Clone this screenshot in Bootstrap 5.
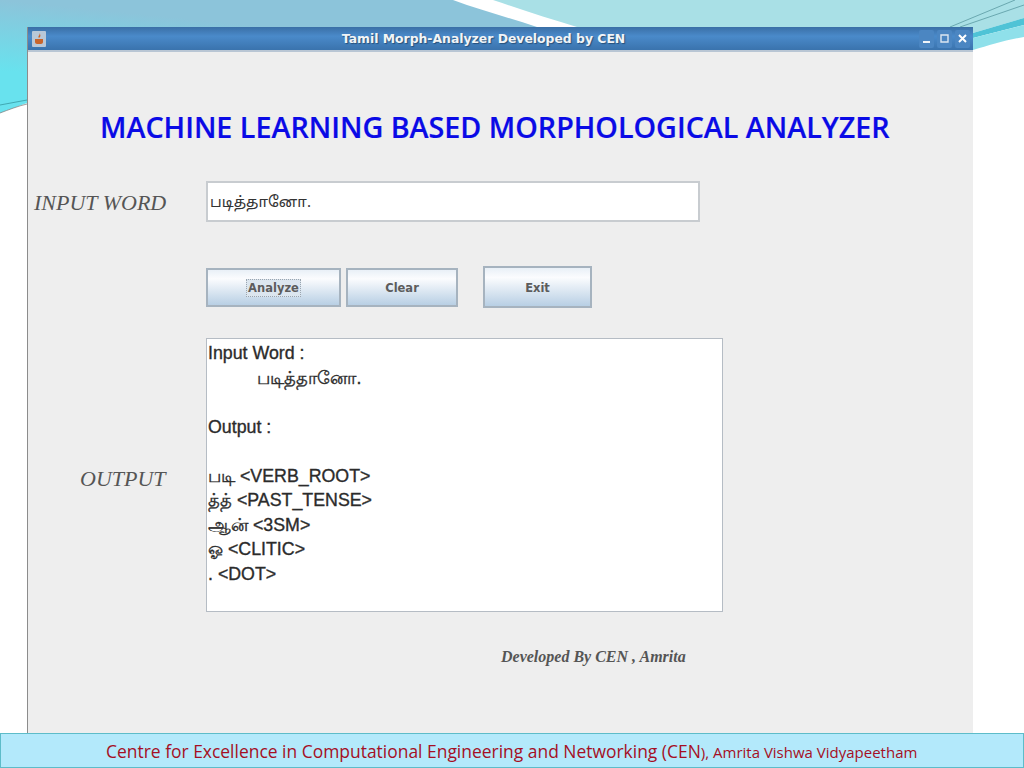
<!DOCTYPE html>
<html lang="en">
<head>
  <meta charset="UTF-8">
  <title>Tamil Morph-Analyzer</title>
  <link href="https://cdn.jsdelivr.net/npm/bootstrap@5.3.0/dist/css/bootstrap.min.css" rel="stylesheet">
  <style>
    body { width: 1024px; height: 768px; overflow: hidden; background: #fff; position: relative; font-family: "Liberation Sans", sans-serif; }
    .slide-bg { position: absolute; left: 0; top: 0; }
    .slide-body { position: relative; height: 733px; padding: 27px 51px 0 27px; }
    .app-window { height: 706px; background: #eeeeee; border-left: 1px solid #8c8c8c; }
    .app-titlebar { height: 25px; background: linear-gradient(#3a6fa6, #4a8aca 40%, #3a73ad); border-bottom: 2px solid #b9c6d4; color: #f1f4f7; font: bold 12.4px "DejaVu Sans", sans-serif; padding: 0 3px 0 4px; gap: 3px; }
    .app-title { flex: 1; text-align: center; padding-left: 2px; text-shadow: 1px 1px 1px #27507a; }
    .tb-btn { width: 15px; height: 18px; border-radius: 2px; background: #4b86c2; }
    .app-heading { font: 600 28.7px "Open Sans", sans-serif; color: #0a0ae6; margin: 55px 0 0 72px; line-height: 40px; -webkit-text-stroke: 0.2px #0a0ae6; white-space: nowrap; }
    .input-row { margin-top: 34px; }
    .side-label { width: 178px; padding: 2px 0 0 6px; font: italic 22px "Liberation Serif", serif; color: #555; }
    .word-box { width: 494px; height: 41px; background: #fff; border: 2px solid #c8ccd0; padding-left: 2px; font-size: 15px; line-height: 41px; color: #333; font-family: "Noto Sans Tamil", "Lohit Tamil", "Liberation Sans", sans-serif; }
    .btn-row { margin: 44px 0 0 178px; align-items: center; }
    .swing-btn { height: 39px; padding: 2px 0 0; border: 2px solid #a6b3bf; border-radius: 0; background: linear-gradient(#e9f0f7, #fbfcfe 25%, #b8cfe4); font: bold 11.5px "DejaVu Sans", sans-serif; color: #5c5c5c; }
    .swing-btn:hover { border-color: #a6b3bf; color: #5c5c5c; }
    .btn-analyze { width: 135px; margin-right: 5px; }
    .btn-analyze span { border: 1px dotted #9aa5b0; padding: 1px; background: #dce6ef; }
    .btn-clear { width: 112px; margin-right: 25px; }
    .btn-exit { width: 109px; height: 42px; }
    .output-row { margin-top: 30px; }
    .output-label { width: 178px; padding-left: 52px; padding-top: 128px; font: italic 22px "Liberation Serif", serif; color: #555; }
    .output-box { width: 517px; height: 274px; background: #fff; border: 1px solid #b5bcc4; padding: 2px 0 0 1px; font-size: 17.8px; line-height: 24.5px; color: #2b2b2b; -webkit-text-stroke: 0.35px #2b2b2b; white-space: pre; }
    .dev-note { margin: 36px 0 0 473px; font: italic bold 16px "Liberation Serif", serif; color: #555; white-space: nowrap; }
    .slide-footer { height: 35px; background: #b3e9fb; border: 1px solid #5dbcc9; color: #a50f24; font: 17.45px "Open Sans", sans-serif; line-height: 35px; padding-left: 105px; white-space: nowrap; }
    .slide-footer small { font-size: 15px; }
  </style>
</head>
<body>
  <!-- slide decoration behind the window -->
  <svg class="slide-bg" width="1024" height="130" viewBox="0 0 1024 130">
    <defs>
      <linearGradient id="skyLeft" gradientUnits="userSpaceOnUse" x1="0" y1="0" x2="-7" y2="70">
        <stop offset="0" stop-color="#8cc4da"/>
        <stop offset="1" stop-color="#68e2ee"/>
      </linearGradient>
    </defs>
    <rect width="1024" height="130" fill="#fff"/>
    <path d="M0 0H453C480 10 510 18 537 27H30V102C18 106 8 110 0 113Z" fill="url(#skyLeft)"/>
    <path d="M493 0H1024V18L973 33V27H577C550 19 520 9 493 0Z" fill="#a9e0e6"/>
    <path d="M973 33L1024 18V25L973 38Z" fill="#4fc3d6"/>
    <path d="M973 38L1024 25V37C1005 40 990 45 973 50Z" fill="#8fe0ea"/>
    <path d="M950 27L1015 0M960 27L1024 5" stroke="#4f8f98" stroke-width="0.7" fill="none"/>
    <path d="M0 105L27 100" stroke="#2f8f98" stroke-width="0.7" fill="none"/>
    <path d="M0 113C8 110 18 106 27 104" stroke="#777" stroke-width="0.7" fill="none"/>
  </svg>

  <div class="slide-body">
    <div class="app-window">
      <div class="app-titlebar d-flex align-items-center">
        <svg width="14" height="16" viewBox="0 0 14 16">
          <rect width="14" height="16" rx="1" fill="#b9c8d8"/>
          <path d="M7 2c2 2-2 3 0 5 1-1 2-2 1-4zM3 8h8v3c0 1-1 2-2 2H5c-1 0-2-1-2-2z" fill="#c9652c"/>
        </svg>
        <div class="app-title">Tamil Morph-Analyzer Developed by CEN</div>
        <div class="tb-btn d-flex align-items-center justify-content-center">
          <svg width="9" height="9" viewBox="0 0 9 9"><path d="M1 7h7v2H1z" fill="#eef3f8"/></svg>
        </div>
        <div class="tb-btn d-flex align-items-center justify-content-center">
          <svg width="9" height="9" viewBox="0 0 9 9"><path d="M1 1h7v7H1z" fill="none" stroke="#dbe6f1" stroke-width="1.4"/></svg>
        </div>
        <div class="tb-btn d-flex align-items-center justify-content-center">
          <svg width="9" height="9" viewBox="0 0 9 9"><path d="M1 1l7 7M8 1l-7 7" stroke="#fff" stroke-width="2"/></svg>
        </div>
      </div>

      <div class="app-heading">MACHINE LEARNING BASED MORPHOLOGICAL ANALYZER</div>

      <div class="input-row d-flex align-items-center">
        <div class="side-label">INPUT WORD</div>
        <div class="word-box">படித்தானோ.</div>
      </div>

      <div class="btn-row d-flex">
        <button type="button" class="btn swing-btn btn-analyze"><span>Analyze</span></button>
        <button type="button" class="btn swing-btn btn-clear">Clear</button>
        <button type="button" class="btn swing-btn btn-exit">Exit</button>
      </div>

      <div class="output-row d-flex">
        <div class="output-label">OUTPUT</div>
        <div class="output-box">Input Word :
          படித்தானோ.

Output :

படி &lt;VERB_ROOT&gt;
த்த் &lt;PAST_TENSE&gt;
ஆன் &lt;3SM&gt;
ஓ &lt;CLITIC&gt;
. &lt;DOT&gt;</div>
      </div>

      <div class="dev-note">Developed By CEN , Amrita</div>
    </div>
  </div>

  <div class="slide-footer">Centre for Excellence in Computational Engineering and Networking (CEN<small>), Amrita Vishwa Vidyapeetham</small></div>

  <script src="https://cdn.jsdelivr.net/npm/bootstrap@5.3.0/dist/js/bootstrap.bundle.min.js"></script>
</body>
</html>
